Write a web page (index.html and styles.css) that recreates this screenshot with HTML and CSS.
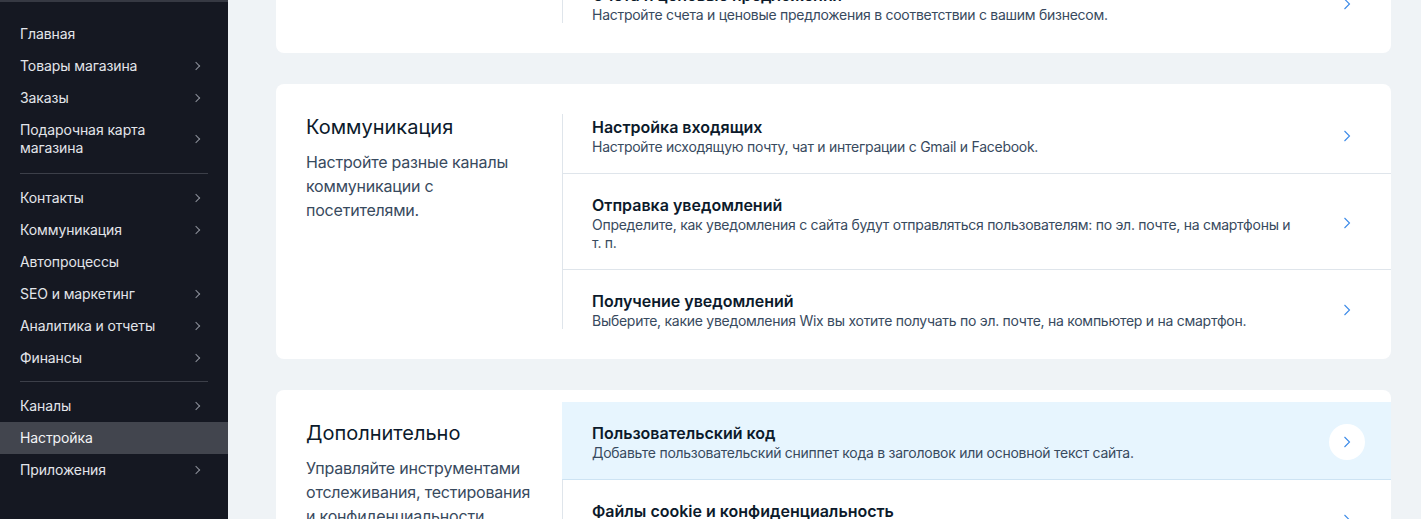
FILE: index.html
```html
<!DOCTYPE html>
<html lang="ru">
<head>
<meta charset="utf-8">
<link rel="stylesheet" href="styles.css">
</head>
<body>
<div class="app">
  <aside class="sidebar">
    <div class="top-rule"></div>
    <nav class="nav">
      <a class="nav-item">Главная</a>
      <a class="nav-item has-sub">Товары магазина<span class="chev"></span></a>
      <a class="nav-item has-sub">Заказы<span class="chev"></span></a>
      <a class="nav-item has-sub two-line"><span>Подарочная карта<br>магазина</span><span class="chev"></span></a>
      <div class="nav-sep"></div>
      <a class="nav-item has-sub">Контакты<span class="chev"></span></a>
      <a class="nav-item has-sub">Коммуникация<span class="chev"></span></a>
      <a class="nav-item">Автопроцессы</a>
      <a class="nav-item has-sub">SEO и маркетинг<span class="chev"></span></a>
      <a class="nav-item has-sub">Аналитика и отчеты<span class="chev"></span></a>
      <a class="nav-item has-sub">Финансы<span class="chev"></span></a>
      <div class="nav-sep"></div>
      <a class="nav-item has-sub">Каналы<span class="chev"></span></a>
      <a class="nav-item active">Настройка</a>
      <a class="nav-item has-sub">Приложения<span class="chev"></span></a>
    </nav>
  </aside>
  <main class="main">
    <div class="stack">
      <section class="card">
        <div class="card-info">
          <h2 class="card-title">Финансы</h2>
          <p class="card-desc">Управляйте платежами, налогами и счетами.</p>
        </div>
        <div class="card-list">
          <div class="row"><div class="row-text"><div class="row-title">Оплата</div><div class="row-desc">Подключите способы оплаты для ваших клиентов.</div></div><span class="row-chev"><svg viewBox="0 0 8 12" width="8" height="12"><path d="M1.5 1l5 5-5 5" fill="none" stroke="currentColor" stroke-width="1.1"/></svg></span></div>
          <div class="row"><div class="row-text"><div class="row-title">Налоги</div><div class="row-desc">Настройте налоговые правила для вашего магазина.</div></div><span class="row-chev"><svg viewBox="0 0 8 12" width="8" height="12"><path d="M1.5 1l5 5-5 5" fill="none" stroke="currentColor" stroke-width="1.1"/></svg></span></div>
          <div class="row"><div class="row-text"><div class="row-title">Счета и ценовые предложения</div><div class="row-desc">Настройте счета и ценовые предложения в соответствии с вашим бизнесом.</div></div><span class="row-chev"><svg viewBox="0 0 8 12" width="8" height="12"><path d="M1.5 1l5 5-5 5" fill="none" stroke="currentColor" stroke-width="1.1"/></svg></span></div>
        </div>
      </section>

      <section class="card">
        <div class="card-info">
          <h2 class="card-title">Коммуникация</h2>
          <p class="card-desc">Настройте разные каналы коммуникации с посетителями.</p>
        </div>
        <div class="card-list">
          <div class="row"><div class="row-text"><div class="row-title">Настройка входящих</div><div class="row-desc">Настройте исходящую почту, чат и интеграции с Gmail и Facebook.</div></div><span class="row-chev"><svg viewBox="0 0 8 12" width="8" height="12"><path d="M1.5 1l5 5-5 5" fill="none" stroke="currentColor" stroke-width="1.1"/></svg></span></div>
          <div class="row"><div class="row-text"><div class="row-title">Отправка уведомлений</div><div class="row-desc">Определите, как уведомления с сайта будут отправляться пользователям: по эл. почте, на смартфоны и т. п.</div></div><span class="row-chev"><svg viewBox="0 0 8 12" width="8" height="12"><path d="M1.5 1l5 5-5 5" fill="none" stroke="currentColor" stroke-width="1.1"/></svg></span></div>
          <div class="row"><div class="row-text"><div class="row-title">Получение уведомлений</div><div class="row-desc">Выберите, какие уведомления Wix вы хотите получать по эл. почте, на компьютер и на смартфон.</div></div><span class="row-chev"><svg viewBox="0 0 8 12" width="8" height="12"><path d="M1.5 1l5 5-5 5" fill="none" stroke="currentColor" stroke-width="1.1"/></svg></span></div>
        </div>
      </section>

      <section class="card">
        <div class="card-info">
          <h2 class="card-title">Дополнительно</h2>
          <p class="card-desc">Управляйте инструментами отслеживания, тестирования и конфиденциальности.</p>
        </div>
        <div class="card-list">
          <div class="row hover"><div class="row-text"><div class="row-title">Пользовательский код</div><div class="row-desc">Добавьте пользовательский сниппет кода в заголовок или основной текст сайта.</div></div><span class="row-chev"><svg viewBox="0 0 8 12" width="8" height="12"><path d="M1.5 1l5 5-5 5" fill="none" stroke="currentColor" stroke-width="1.1"/></svg></span></div>
          <div class="row"><div class="row-text"><div class="row-title">Файлы cookie и конфиденциальность</div><div class="row-desc">Управляйте баннером cookie и настройками конфиденциальности.</div></div><span class="row-chev"><svg viewBox="0 0 8 12" width="8" height="12"><path d="M1.5 1l5 5-5 5" fill="none" stroke="currentColor" stroke-width="1.1"/></svg></span></div>
        </div>
      </section>
    </div>
  </main>
</div>
</body>
</html>
```
FILE: styles.css
```css
* { box-sizing: border-box; }
html, body { margin: 0; padding: 0; height: 100%; overflow: hidden; }
body {
  font-family: "Inter", "Noto Sans", sans-serif;
  background: #eff3f6;
  color: #0c1a2b;
}
.app { display: flex; height: 519px; }

.sidebar {
  width: 228px;
  flex: 0 0 228px;
  background: #151822;
  color: #e3e5ea;
  height: 100%;
}
.top-rule { height: 2px; background: #3a3d47; opacity: .9; }
.nav { display: flex; flex-direction: column; padding-top: 16px; }
.nav-item {
  display: flex;
  align-items: center;
  justify-content: space-between;
  height: 32px;
  padding: 0 26px 0 20px;
  font-size: 14px;
  line-height: 18px;
  letter-spacing: -0.1px;
  color: #e3e5ea;
  text-decoration: none;
}
.nav-item.two-line { height: 52px; padding-bottom: 2px; }
.nav-item.active { background: #42454e; color: #f2f3f5; }
.chev {
  width: 6px; height: 6px;
  border-right: 1px solid #8d909a;
  border-top: 1px solid #8d909a;
  transform: rotate(45deg);
  margin-right: 3px;
}
.nav-sep { height: 1px; background: #3c3f49; margin: 7px 20px 8px 20px; }

.main { flex: 1; padding: 0 30px 0 48px; }
.stack { display: flex; flex-direction: column; gap: 31px; margin-top: -204px; }

.card {
  display: flex;
  background: #fff;
  border-radius: 8px;
  overflow: hidden;
}
.card-info {
  width: 287px;
  flex: 0 0 287px;
  margin: 30px 0;
  padding: 0 30px;
  border-right: 1px solid #dfe5eb;
}
.card-title {
  margin: 0;
  font-size: 20px;
  font-weight: 400;
  line-height: 26px;
  color: #0c1a2b;
}
.card-desc {
  margin: 10px 0 0;
  font-size: 16px;
  line-height: 24px;
  letter-spacing: -0.2px;
  color: #384a5e;
}
.card-list { flex: 1; padding: 12px 0; display: flex; flex-direction: column; }
.row {
  display: flex;
  align-items: center;
  padding: 20px 26px 17px 30px;
  border-bottom: 1px solid #dfe5eb;
  margin-left: -1px;
}
.card-list .row:last-child { border-bottom: 0; }
.row.hover { background: #e7f5fe; border-bottom-color: #cde3f3; }
.row-text { flex: 1; padding-right: 30px; }
.row-title { font-size: 16px; font-weight: 600; line-height: 22px; color: #0c1a2b; }
.row-desc { font-size: 14px; line-height: 18px; letter-spacing: -0.27px; color: #384a5e; }
.row-chev {
  width: 36px; height: 36px;
  border-radius: 50%;
  display: flex; align-items: center; justify-content: center;
  color: #3b8ae8;
}
.row.hover .row-chev { background: #fff; }
```
